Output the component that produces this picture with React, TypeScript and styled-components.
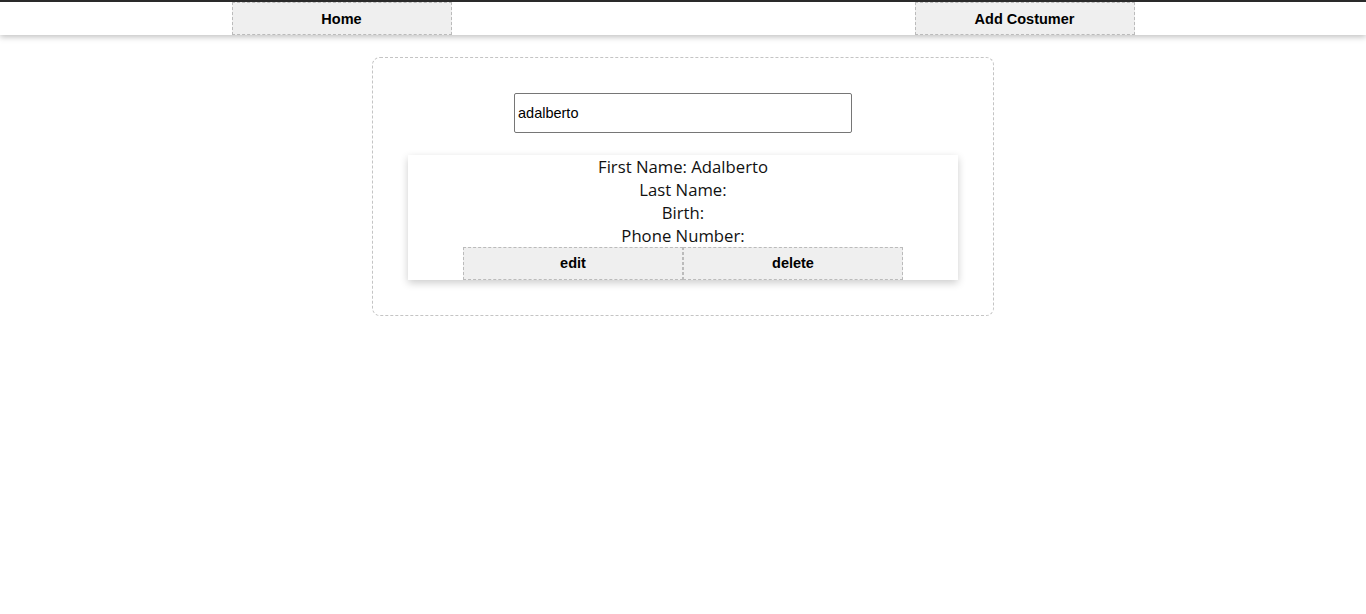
import React from "react";
import styled, { createGlobalStyle } from "styled-components";

const Global = createGlobalStyle`
  html, body { margin: 0; padding: 0; background: #fff; }
  body { font-family: "Liberation Sans", Arial, sans-serif; color: #000; }
`;

const Header = styled.header`
  display: flex;
  justify-content: space-around;
  align-items: flex-end;
  height: 35px;
  box-sizing: border-box;
  border-top: 2px solid #2a2a2a;
  background: #fff;
  box-shadow: 0 2px 6px rgba(0, 0, 0, 0.25);
`;

const NavButton = styled.button<{ $lift?: boolean }>`
  width: 220px;
  height: 33px;
  box-sizing: border-box;
  background: #efefef;
  border: 1px dashed #bbb;
  font-family: "Liberation Sans", Arial, sans-serif;
  font-weight: bold;
  font-size: 14.5px;
  line-height: 1;
  color: #000;
  padding: ${(p) => (p.$lift ? "0 0 1px" : "2px 0 0")};
  cursor: pointer;
`;

const Main = styled.main`
  display: flex;
  justify-content: center;
  padding-top: 22px;
`;

const Panel = styled.section`
  width: 622px;
  box-sizing: border-box;
  border: 1px dashed #c4c4c4;
  border-radius: 8px;
  padding: 35px 35px 35px;
  display: flex;
  flex-direction: column;
  align-items: center;
`;

const Search = styled.input`
  width: 338px;
  height: 40px;
  box-sizing: border-box;
  border: 1px solid #767676;
  border-radius: 2px;
  padding: 0 3px;
  font-family: "Liberation Sans", Arial, sans-serif;
  font-size: 14.5px;
  color: #000;
  outline: none;
`;

const Card = styled.div`
  margin-top: 22px;
  width: 550px;
  background: #fff;
  box-shadow: 0 3px 8px rgba(0, 0, 0, 0.2);
  display: flex;
  flex-direction: column;
  align-items: center;
  font-family: "Segoe UI", "Open Sans", "Noto Sans", sans-serif;
  font-size: 16.7px;
  line-height: 23px;
  color: #111;
`;

const Line = styled.div`
  text-align: center;
`;

const Actions = styled.div`
  display: flex;
`;

export default function App() {
  return (
    <>
      <Global />
      <Header>
        <NavButton>Home</NavButton>
        <NavButton>Add Costumer</NavButton>
      </Header>
      <Main>
        <Panel>
          <Search defaultValue="adalberto" />
          <Card>
            <Line>First Name: Adalberto</Line>
            <Line>Last Name:</Line>
            <Line>Birth:</Line>
            <Line>Phone Number:</Line>
            <Actions>
              <NavButton $lift>edit</NavButton>
              <NavButton $lift>delete</NavButton>
            </Actions>
          </Card>
        </Panel>
      </Main>
    </>
  );
}
